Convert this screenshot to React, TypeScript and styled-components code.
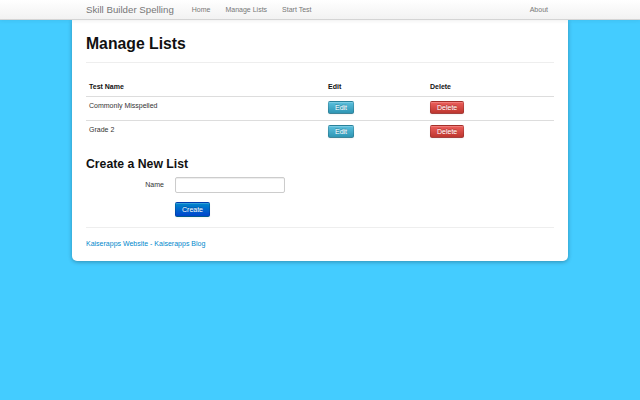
import React from "react";
import styled, { createGlobalStyle } from "styled-components";

const Global = createGlobalStyle`
  html, body { margin: 0; padding: 0; }
  body {
    background: #44ccff;
    font-family: "Liberation Sans", Arial, sans-serif;
    font-size: 7px;
    line-height: 10px;
    color: #333;
    height: 400px;
    overflow: hidden;
  }
`;

const NavBar = styled.div`
  height: 19px;
  background: linear-gradient(to bottom, #ffffff, #f2f2f2);
  border-bottom: 1px solid #d4d4d4;
  box-shadow: 0 1px 4px rgba(0, 0, 0, 0.065);
  position: relative;
  z-index: 2;
`;

const NavInner = styled.div`
  width: 496px;
  margin: 0 auto;
  height: 19px;
  display: flex;
  align-items: center;
  box-sizing: border-box;
  padding: 0 12.5px 0 14px;
`;

const Brand = styled.span`
  font-size: 9.7px;
  color: #777;
  margin-right: 10.5px;
  line-height: 19px;
`;

const NavLink = styled.a<{ $right?: boolean }>`
  font-size: 7px;
  color: #777;
  padding: 0 7.5px;
  text-decoration: none;
  line-height: 19px;
  margin-left: ${(p) => (p.$right ? "auto" : "0")};
`;

const Card = styled.div`
  width: 496px;
  margin: 0 auto;
  background: #fff;
  box-sizing: border-box;
  padding: 0 14px 12px;
  border-radius: 0 0 5px 5px;
  box-shadow: 0 1px 4px rgba(0, 0, 0, 0.3);
`;

const PageHeader = styled.div`
  padding-top: 13px;
  padding-bottom: 7px;
  border-bottom: 1px solid #eee;
  margin-bottom: 14px;
`;

const Title = styled.h1`
  margin: 0;
  font-size: 15.75px;
  line-height: 22px;
  font-weight: bold;
  color: #111;
`;

const Table = styled.table`
  width: 468px;
  border-collapse: collapse;
  table-layout: fixed;
`;

const Th = styled.th<{ $w: number }>`
  width: ${(p) => p.$w}px;
  text-align: left;
  font-weight: bold;
  color: #111;
  padding: 5px 3px 4px;
  height: 10px;
  vertical-align: top;
`;

const Td = styled.td`
  padding: 4px 3px 6px;
  border-top: 1px solid #ddd;
  vertical-align: top;
  height: 13px;
  color: #333;
`;

const Btn = styled.button<{ $kind: "info" | "danger" | "primary" }>`
  font-family: inherit;
  font-size: 7px;
  line-height: 11px;
  height: ${(p) => (p.$kind === "primary" ? 15 : 13)}px;
  padding: 0 6px;
  color: #fff;
  border-radius: 2px;
  cursor: pointer;
  text-shadow: 0 -1px 0 rgba(0, 0, 0, 0.25);
  border: 1px solid rgba(0, 0, 0, 0.15);
  border-bottom-color: rgba(0, 0, 0, 0.3);
  box-shadow: inset 0 1px 0 rgba(255, 255, 255, 0.2), 0 1px 2px rgba(0, 0, 0, 0.05);
  background: ${(p) =>
    p.$kind === "info"
      ? "linear-gradient(to bottom, #5bc0de, #2f96b4)"
      : p.$kind === "danger"
      ? "linear-gradient(to bottom, #ee5f5b, #bd362f)"
      : "linear-gradient(to bottom, #0088cc, #0044cc)"};
  display: block;
`;

const SubTitle = styled.h3`
  margin: 13px 0 5px;
  font-size: 12.25px;
  line-height: 15px;
  font-weight: bold;
  color: #111;
`;

const FormRow = styled.div`
  display: flex;
  align-items: center;
  margin-bottom: 9px;
`;

const Label = styled.label`
  width: 78px;
  text-align: right;
  padding-right: 11px;
  color: #333;
`;

const Input = styled.input`
  width: 110px;
  height: 16px;
  box-sizing: border-box;
  border: 1px solid #ccc;
  border-radius: 2px;
  box-shadow: inset 0 1px 1px rgba(0, 0, 0, 0.075);
  padding: 0 3px;
  font-family: inherit;
  font-size: 7px;
`;

const FormActions = styled.div`
  padding-left: 89px;
`;

const Divider = styled.hr`
  border: 0;
  border-top: 1px solid #eee;
  margin: 10px 0 11px;
`;

const Footer = styled.div`
  color: #0088cc;
`;

const FootLink = styled.a`
  color: #0088cc;
  text-decoration: none;
`;

const rows = ["Commonly Misspelled", "Grade 2"];

export default function App() {
  return (
    <>
      <Global />
      <NavBar>
        <NavInner>
          <Brand>Skill Builder Spelling</Brand>
          <NavLink>Home</NavLink>
          <NavLink>Manage Lists</NavLink>
          <NavLink>Start Test</NavLink>
          <NavLink $right>About</NavLink>
        </NavInner>
      </NavBar>
      <Card>
        <PageHeader>
          <Title>Manage Lists</Title>
        </PageHeader>
        <Table>
          <thead>
            <tr>
              <Th $w={233}>Test Name</Th>
              <Th $w={96}>Edit</Th>
              <Th $w={121}>Delete</Th>
            </tr>
          </thead>
          <tbody>
            {rows.map((r) => (
              <tr key={r}>
                <Td>{r}</Td>
                <Td>
                  <Btn $kind="info">Edit</Btn>
                </Td>
                <Td>
                  <Btn $kind="danger">Delete</Btn>
                </Td>
              </tr>
            ))}
          </tbody>
        </Table>
        <SubTitle>Create a New List</SubTitle>
        <FormRow>
          <Label>Name</Label>
          <Input />
        </FormRow>
        <FormActions>
          <Btn $kind="primary">Create</Btn>
        </FormActions>
        <Divider />
        <Footer>
          <FootLink>Kaiserapps Website</FootLink> - <FootLink>Kaiserapps Blog</FootLink>
        </Footer>
      </Card>
    </>
  );
}
